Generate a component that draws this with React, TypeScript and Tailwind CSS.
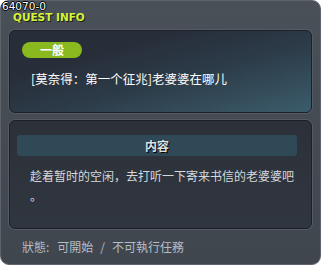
import React from 'react';

const cjk = "font-['Noto_Sans_CJK_SC','Noto_Sans',sans-serif]";

export default function App() {
  return (
    <div className="w-[322px] h-[266px] bg-white">
      <div className="relative w-[321px] h-[265px] rounded-[9px] border border-[#5c636b] bg-gradient-to-b from-[#4a5058] to-[#40464e] flex flex-col">
        <div className="absolute left-[1px] top-[0px] text-[10.5px] leading-[10px] text-white font-['DejaVu_Sans',sans-serif] [text-shadow:1px_0_0_#000,-1px_0_0_#000,0_1px_0_#000,0_-1px_0_#000]">
          64070-0
        </div>
        <div className="pl-[12px] pt-[11px] h-[29px] text-[10.5px] leading-[10px] font-bold text-[#d6f23a] font-['DejaVu_Sans',sans-serif] [text-shadow:1px_1px_0_#1a1f10]">
          QUEST INFO
        </div>

        <div className="mx-[8px] h-[83px] rounded-[6px] border border-[#1c2128] shadow-[0_0_0_1px_#545b63] bg-[linear-gradient(165deg,#272d39_25%,#2c3a47_55%,#3b5c6b_100%)] px-[12px] pt-[11px]">
          <div className={`w-[60px] h-[16px] rounded-full bg-[#8ab81f] flex items-center justify-center text-white text-[12px] font-bold leading-none ${cjk}`}>
            一般
          </div>
          <div className={`mt-[13px] pl-[9px] text-[12.5px] leading-[16px] text-white ${cjk}`}>
            [莫奈得：第一个征兆]老婆婆在哪儿
          </div>
        </div>

        <div className="mx-[8px] mt-[7px] h-[109px] rounded-[6px] border border-[#1c2128] shadow-[0_0_0_1px_#545b63] bg-gradient-to-b from-[#2c3139] to-[#30363f] pl-[7px] pr-[14px] pt-[14px]">
          <div className={`h-[21px] rounded-[3px] bg-[#2f4a56] flex items-center justify-center text-[12px] font-bold text-[#dfe3e4] [text-shadow:1px_1px_0_#000] ${cjk}`}>
            内容
          </div>
          <div className={`mt-[10px] pl-[13px] text-[12px] leading-[20px] text-[#d4d8dc] ${cjk}`}>
            趁着暂时的空闲，去打听一下寄来书信的老婆婆吧
            <br />。
          </div>
        </div>

        <div className="flex pl-[21px] pt-[10px] text-[12px] leading-[16px] text-[#b4bcc4] font-['Noto_Sans_CJK_TC','Noto_Sans',sans-serif]">
          <span>狀態:</span>
          <span className="ml-[8px]">可開始</span>
          <span className="ml-[7px]">/</span>
          <span className="ml-[7px]">不可執行任務</span>
        </div>
      </div>
    </div>
  );
}
